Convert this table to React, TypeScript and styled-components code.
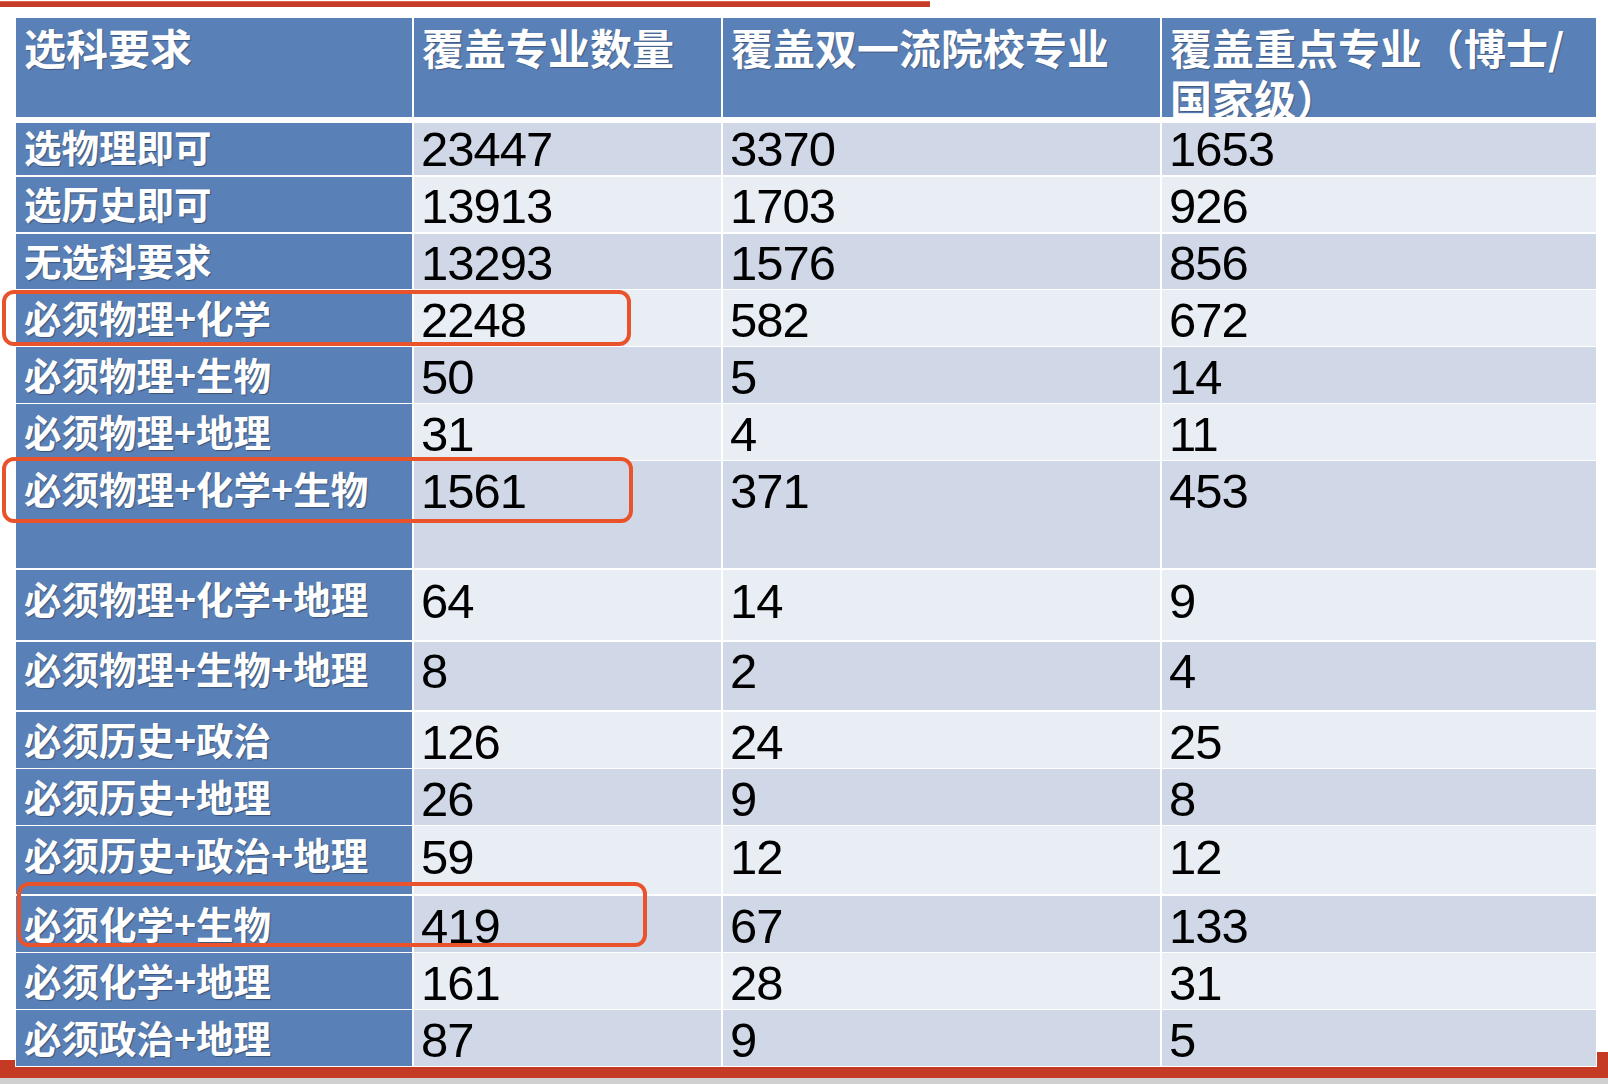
import React from 'react'
import styled, { createGlobalStyle } from 'styled-components'

const GlobalStyle = createGlobalStyle`
    html, body {
        margin: 0;
        padding: 0;
        background: #ffffff;
    }
    body {
        width: 1608px;
        height: 1084px;
        overflow: hidden;
    }
`

const BLUE = '#5a80b8'
const BAND_DARK = '#d0d8e8'
const BAND_LIGHT = '#e9edf4'
const CJK = `"Noto Sans CJK SC", "Noto Sans", sans-serif`

const Page = styled.div`
    width: 1608px;
    height: 1084px;
    display: flex;
    flex-direction: column;
    background: #ffffff;
`

const TopRule = styled.div`
    width: 930px;
    height: 6px;
    margin-top: 1px;
    background: #c53b28;
    border-top: 1px solid #d9644f;
    box-sizing: border-box;
`

const Stage = styled.div`
    position: relative;
    z-index: 1;
    margin: 11px 0 0 16px;
    width: 1580px;
    outline: 1px solid #ffffff;
    background: #ffffff;
`

const Table = styled.div`
    display: flex;
    flex-direction: column;
    gap: 2px;
`

const Row = styled.div<{ $h: number }>`
    display: grid;
    grid-template-columns: 396px 307px 437px 434px;
    column-gap: 2px;
    height: ${(p) => p.$h}px;
`

const HeaderRow = styled(Row)`
    margin-bottom: 4px;
`

const HeadCell = styled.div`
    background: ${BLUE};
    color: #ffffff;
    font-family: ${CJK};
    font-weight: 700;
    font-size: 42px;
    line-height: 51px;
    padding: 3px 8px 0;
    overflow: hidden;
    text-shadow: 1px 1px 1px rgba(0, 0, 0, 0.3);
`

const LabelCell = styled.div<{ $top: number }>`
    background: ${BLUE};
    color: #ffffff;
    font-family: ${CJK};
    font-weight: 700;
    font-size: 37.5px;
    line-height: 46px;
    padding: ${(p) => p.$top - 8}px 8px 0;
    white-space: nowrap;
    text-shadow: 1px 1px 1px rgba(0, 0, 0, 0.35);
`

const NumCell = styled.div<{ $top: number; $dark: boolean }>`
    background: ${(p) => (p.$dark ? BAND_DARK : BAND_LIGHT)};
    color: #000000;
    font-family: "Liberation Sans", Arial, sans-serif;
    font-size: 49px;
    line-height: 52px;
    letter-spacing: -1px;
    padding: ${(p) => p.$top - 8}px 7px 0;
`

const Highlight = styled.div<{ $x: number; $y: number; $w: number; $h: number }>`
    position: absolute;
    left: ${(p) => p.$x}px;
    top: ${(p) => p.$y}px;
    width: ${(p) => p.$w}px;
    height: ${(p) => p.$h}px;
    box-sizing: border-box;
    border: 4px solid #e9532b;
    border-radius: 12px;
    pointer-events: none;
`

const Footer = styled.div`
    position: relative;
    margin-top: -6px;
    height: 18px;
    background: #c43a25;

    &::after {
        content: '';
        position: absolute;
        right: 0;
        top: -8px;
        width: 11px;
        height: 8px;
        background: #c43a25;
    }
`

const FooterShade = styled.div`
    flex: 1;
    background: #d0d0d0;
`

const headers = ['选科要求', '覆盖专业数量', '覆盖双一流院校专业', '覆盖重点专业（博士/国家级）']

type Line = [string, string, string, string, number, number]

// label, total, double-first-class, key, row height, ink offset
const rows: Line[] = [
    ['选物理即可', '23447', '3370', '1653', 52, 8],
    ['选历史即可', '13913', '1703', '926', 55, 11],
    ['无选科要求', '13293', '1576', '856', 54, 11],
    ['必须物理+化学', '2248', '582', '672', 55, 12],
    ['必须物理+生物', '50', '5', '14', 55, 12],
    ['必须物理+地理', '31', '4', '11', 55, 12],
    ['必须物理+化学+生物', '1561', '371', '453', 107, 12],
    ['必须物理+化学+地理', '64', '14', '9', 70, 13],
    ['必须物理+生物+地理', '8', '2', '4', 68, 11],
    ['必须历史+政治', '126', '24', '25', 55, 12],
    ['必须历史+地理', '26', '9', '8', 55, 12],
    ['必须历史+政治+地理', '59', '12', '12', 68, 13],
    ['必须化学+生物', '419', '67', '133', 55, 12],
    ['必须化学+地理', '161', '28', '31', 55, 12],
    ['必须政治+地理', '87', '9', '5', 56, 12],
]

const boxes = [
    { x: -14, y: 272, w: 629, h: 56 },
    { x: -14, y: 439, w: 631, h: 66 },
    { x: 1, y: 864, w: 630, h: 65 },
]

const App: React.FC = () => {
    return (
        <Page>
            <GlobalStyle />
            <TopRule />
            <Stage>
                <Table>
                    <HeaderRow $h={99}>
                        {headers.map((h) => (
                            <HeadCell key={h}>{h}</HeadCell>
                        ))}
                    </HeaderRow>
                    {rows.map(([label, a, b, c, h, top], i) => (
                        <Row key={label} $h={h}>
                            <LabelCell $top={top}>{label}</LabelCell>
                            <NumCell $top={top} $dark={i % 2 === 0}>{a}</NumCell>
                            <NumCell $top={top} $dark={i % 2 === 0}>{b}</NumCell>
                            <NumCell $top={top} $dark={i % 2 === 0}>{c}</NumCell>
                        </Row>
                    ))}
                </Table>
                {boxes.map((b, i) => (
                    <Highlight key={i} $x={b.x} $y={b.y} $w={b.w} $h={b.h} />
                ))}
            </Stage>
            <Footer />
            <FooterShade />
        </Page>
    )
}

export default App
